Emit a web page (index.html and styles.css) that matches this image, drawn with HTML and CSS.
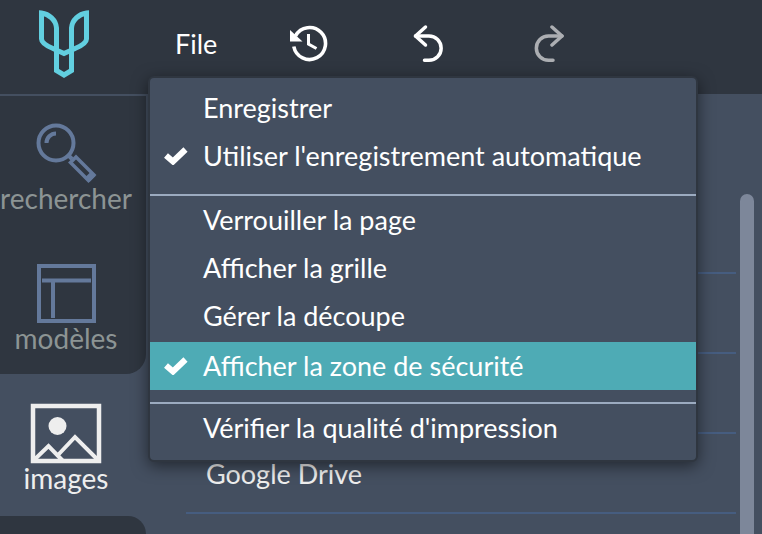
FILE: index.html
```html
<!DOCTYPE html>
<html lang="fr">
<head>
    <meta charset="UTF-8">
    <meta name="viewport" content="width=device-width, initial-scale=1.0">
    <title>Images</title>
    <link rel="stylesheet" href="styles.css">
</head>
<body>

<!-- Barre du haut -->
<header class="topbar">
    <svg class="logo" viewBox="0 0 52 68" fill="none" stroke="#62cfe0" stroke-width="5">
        <path d="M18.500 43.500V60.500L26 65L33.500 60.500V43.500"/>
        <path d="M18.500 44V18C18 10 11 4 3.500 3V29C3.500 33 9 36 15 38.500L26 43.500L37 38.500C43 36 48.500 33 48.500 29V3C41 4 34 10 33.500 18V44"/>
    </svg>
    <nav class="tools">
        <div class="file-wrap">
            <button type="button" class="btn-file">File</button>

            <!-- Menu File -->
            <div class="menu">
                <div class="menu-group">
                    <button type="button" class="menu-item">Enregistrer</button>
                    <button type="button" class="menu-item">
                        <svg class="check" viewBox="0 0 24 18"><path d="M2 8.500L9 14.500L21.500 2.500" fill="none" stroke="#fff" stroke-width="6"/></svg>
                        Utiliser l'enregistrement automatique
                    </button>
                </div>
                <div class="menu-group">
                    <button type="button" class="menu-item">Verrouiller la page</button>
                    <button type="button" class="menu-item">Afficher la grille</button>
                    <button type="button" class="menu-item">Gérer la découpe</button>
                    <button type="button" class="menu-item active">
                        <svg class="check" viewBox="0 0 24 18"><path d="M2 8.500L9 14.500L21.500 2.500" fill="none" stroke="#fff" stroke-width="6"/></svg>
                        Afficher la zone de sécurité
                    </button>
                </div>
                <div class="menu-group">
                    <button type="button" class="menu-item">Vérifier la qualité d'impression</button>
                </div>
            </div>
        </div>
        <button type="button" class="btn-icon" aria-label="Historique">
            <svg width="40" height="40" viewBox="0 0 40 40" fill="none" stroke="#fff">
                <path d="M7.500 12.800A16 16 0 1 1 5.800 23.500" stroke-width="3.600"/>
                <path d="M2 7L2 18.500H14.500Z" fill="#fff" stroke="none"/>
                <path d="M20.500 11V21L28.500 25.500" stroke-width="3"/>
            </svg>
        </button>
        <button type="button" class="btn-icon" aria-label="Annuler">
            <svg width="40" height="40" viewBox="0 0 40 40" fill="none" stroke="#fff" stroke-width="3.500" stroke-linecap="round" stroke-linejoin="round">
                <path d="M17.500 4L7.500 13L17.500 22"/>
                <path d="M7.500 13H21A12 12 0 0 1 21 37.300H16.500"/>
            </svg>
        </button>
        <button type="button" class="btn-icon disabled" aria-label="Rétablir" disabled>
            <svg width="40" height="40" viewBox="0 0 40 40" fill="none" stroke="#fff" stroke-width="3.500" stroke-linecap="round" stroke-linejoin="round">
                <path d="M24 4L34 13L24 22"/>
                <path d="M34 13H20.500A12 12 0 0 0 20.500 37.300H25"/>
            </svg>
        </button>
    </nav>
</header>

<div class="content">
    <!-- Onglets -->
    <aside class="sidebar">
        <button type="button" class="tab tab-first">
            <svg width="64" height="64" viewBox="0 0 64 64" fill="none" stroke="#64799b">
                <circle cx="22" cy="23" r="17.500" stroke-width="4"/>
                <path d="M12.500 23A9.500 9.500 0 0 1 22 13.500" stroke-width="4"/>
                <path d="M34 35L38 39" stroke-width="4"/>
                <path d="M36.500 42.500L42 37L60 55L54.500 60.500Z" stroke-width="3.500"/>
                <path d="M51 57.500L57 51.500L61.500 56L55.500 62Z" fill="#64799b" stroke="none"/>
            </svg>
            <span>rechercher</span>
        </button>
        <button type="button" class="tab tab-before">
            <svg width="64" height="64" viewBox="0 0 64 64" fill="none" stroke="#64799b" stroke-width="4">
                <path d="M5 6H60V61H5ZM8 20.500H57M19 22V58"/>
            </svg>
            <span>modèles</span>
        </button>
        <button type="button" class="tab tab-active">
            <svg width="72" height="64" viewBox="0 0 72 64" fill="none" stroke="#eee" stroke-width="4">
                <path d="M3 6H69V61H3Z" stroke-width="4.500"/>
                <circle cx="27.500" cy="26" r="9" fill="#eee" stroke="none"/>
                <path d="M4 60L18.500 46L33 61M28 55L45 37L69 61"/>
            </svg>
            <span>images</span>
        </button>
        <div class="tab-after"></div>
    </aside>

    <!-- Sources d'images -->
    <main class="panel">
        <ul class="sources">
            <li></li>
            <li></li>
            <li></li>
            <li><a href="#">Google Drive</a></li>
        </ul>
        <div class="scrollbar"></div>
    </main>
</div>

</body>
</html>
```

FILE: styles.css
```css
:root {
    --dark: #2f3640;
    --panel: #444f60;
    --accent: #4eabb5;
    --separator: #9cabc0;
    --line: #465d80;
}

* {
    box-sizing: border-box;
}

body {
    margin: 0;
    height: 100vh;
    display: flex;
    flex-direction: column;
    overflow: hidden;
    background-color: var(--panel);
    font-family: Lato, "Liberation Sans", sans-serif;
    font-size: 27px;
    color: white;
}

button {
    padding: 0;
    border: none;
    background: none;
    font: inherit;
    color: inherit;
    cursor: pointer;
}

.topbar {
    display: flex;
    flex: none;
    height: 94px;
    padding-left: 38px;
    background-color: var(--dark);
}

.logo {
    width: 52px;
    height: 68px;
    margin-top: 10px;
}

.tools {
    display: flex;
    align-items: center;
    height: 86px;
    margin-left: 60px;
}

.file-wrap {
    position: relative;
    display: flex;
    align-items: center;
    height: 86px;
    padding: 0 25px;
    margin-right: 46px;
}

.btn-icon {
    width: 40px;
    height: 40px;
    margin-right: 80px;
}

.btn-icon svg {
    display: block;
}

.disabled {
    opacity: 0.6;
}

.menu {
    position: absolute;
    top: 76px;
    left: -2px;
    z-index: 10;
    width: 550px;
    border: 2px solid var(--dark);
    border-radius: 6px;
    background-color: var(--panel);
    box-shadow: 0 4px 16px rgba(0, 0, 0, 0.5);
}

.menu-group {
    padding-bottom: 12px;
    border-bottom: 2px solid var(--separator);
}

.menu-group:first-child {
    padding: 6px 0 14px;
}

.menu-group:last-child {
    padding-bottom: 8px;
    border-bottom: none;
}

.menu-item {
    position: relative;
    display: block;
    width: 100%;
    height: 48px;
    padding: 0 0 2px 53px;
    text-align: left;
    white-space: nowrap;
}

.menu-item.active {
    margin-top: 2px;
    background-color: var(--accent);
}

.check {
    position: absolute;
    top: 15px;
    left: 14px;
    width: 24px;
    height: 18px;
}

.content {
    display: flex;
    flex: 1;
    min-height: 0;
}

.sidebar {
    display: flex;
    flex-direction: column;
    flex: none;
    width: 146px;
}

.tab {
    display: flex;
    flex-direction: column;
    align-items: center;
    flex: none;
    height: 140px;
    padding: 26px 14px 0 0;
    background-color: var(--dark);
    color: #8c9494;
    font-size: 28px;
    line-height: 28px;
}

.tab svg {
    flex: none;
}

.tab-first {
    padding-top: 24px;
    border-top: 2px solid var(--panel);
}

.tab-before {
    border-bottom-right-radius: 20px;
}

.tab-active {
    height: 142px;
    background-color: var(--panel);
    color: #eee;
}

.tab-after {
    flex: 1;
    border-top-right-radius: 20px;
    background-color: var(--dark);
}

.panel {
    display: flex;
    flex: 1;
    gap: 4px;
    padding: 100px 8px 0 40px;
}

.sources {
    flex: 1;
    margin: 0;
    padding: 0;
    list-style: none;
}

.sources li {
    display: flex;
    align-items: center;
    height: 80px;
    padding-left: 20px;
    border-bottom: 2px solid var(--line);
}

.sources a {
    color: #eee;
    text-decoration: none;
}

.scrollbar {
    width: 14px;
    border-radius: 7px 7px 0 0;
    background-color: #7d879a;
}
```
